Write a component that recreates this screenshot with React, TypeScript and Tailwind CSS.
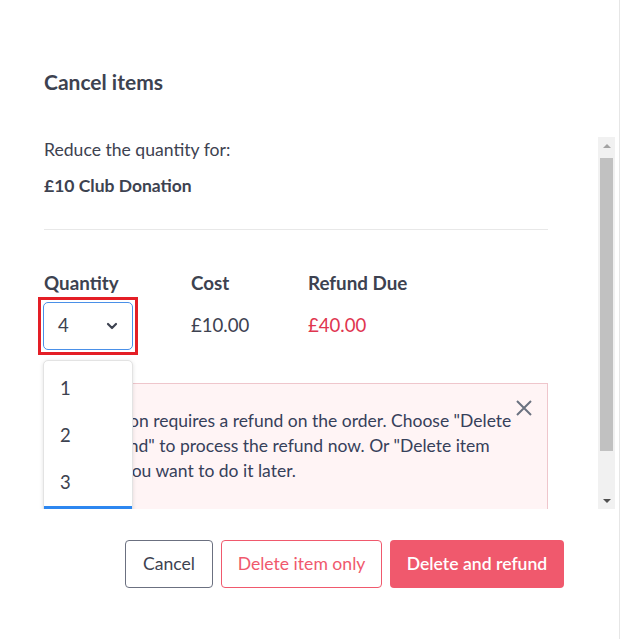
import * as React from 'react';

const options = [1, 2, 3, 4];

const Scrollbar: React.FC = () => (
    <div className="flex h-full w-[17px] flex-col bg-[#f1f1f1]">
        <div className="flex h-[17px] items-center justify-center">
            <div className="h-0 w-0 border-x-[4px] border-b-[4px] border-x-transparent border-b-[#a3a3a3]" />
        </div>
        <div className="mx-[2px] mt-[4px] h-[293px] bg-[#c1c1c1]" />
        <div className="flex-1" />
        <div className="flex h-[17px] items-center justify-center">
            <div className="h-0 w-0 border-x-[4px] border-t-[4px] border-x-transparent border-t-[#505050]" />
        </div>
    </div>
);

const QuantitySelect: React.FC = () => (
    <div className="relative w-[90px]">
        <div className="flex h-[48px] w-[90px] items-center justify-between rounded-[5px] border-[1.5px] border-[#4a90e8] pl-[14px] pr-[14px]">
            <span className="text-[18.5px] text-[#3d4250]">4</span>
            <svg width="12" height="8" viewBox="0 0 12 8" fill="none">
                <path d="M2 2l4 4 4-4" stroke="#3d4250" strokeWidth="2.2" strokeLinecap="round" strokeLinejoin="round" />
            </svg>
        </div>
        {/* red highlight frame drawn over the select */}
        <div className="pointer-events-none absolute -inset-[5px] border-[3px] border-[#e41e26]" />
        <div className="absolute left-0 top-[58px] z-10 w-[90px] rounded-t-[5px] border border-[#e3e3e3] bg-white pt-[4px] shadow-[0_1px_4px_rgba(0,0,0,0.12)]">
            {options.map(n => (
                <div
                    key={n}
                    className={`flex h-[47px] items-center pl-[16px] text-[18.5px] ${n === 4 ? 'bg-[#2d87f0] text-white' : 'text-[#3d4250]'}`}
                >
                    {n}
                </div>
            ))}
        </div>
    </div>
);

export default function App() {
    return (
        <div className="h-[639px] w-[621px] overflow-hidden bg-white font-['Lato','Noto_Sans',sans-serif] text-[#3d4250]">
            <div className="h-full w-[620px] border-r border-[#e6e6e6]">
                <h2 className="pl-[44px] pt-[70px] text-[21px] font-bold leading-[24px] text-[#3d4250]">Cancel items</h2>

                <div className="mt-[43px] flex h-[372px] w-[615px] overflow-hidden">
                    <div className="w-[598px] pl-[44px] pr-[50px]">
                        <p className="mt-[1px] text-[17.6px] leading-[24px]">Reduce the quantity for:</p>
                        <p className="mt-[12px] text-[17.5px] font-bold leading-[24px]">£10 Club Donation</p>
                        <div className="mt-[31px] h-px bg-[#e8e8e8]" />

                        <div className="mt-[41px] grid grid-cols-[147px_117px_1fr]">
                            <div className="text-[18.8px] font-bold leading-[24px]">Quantity</div>
                            <div className="text-[18.8px] font-bold leading-[24px]">Cost</div>
                            <div className="text-[18.8px] font-bold leading-[24px]">Refund Due</div>
                            <div className="mt-[7px] -ml-[1px]"><QuantitySelect /></div>
                            <div className="mt-[7px] flex h-[48px] items-center text-[18.6px]">£10.00</div>
                            <div className="mt-[7px] flex h-[48px] items-center text-[18.6px] text-[#e0364f]">£40.00</div>
                        </div>

                        <div className="relative mt-[33px] h-[127px] border border-[#efc6cc] bg-[#fff4f5] pl-[20px] pr-[28px] pt-[24px]">
                            <p className="text-[17.5px] leading-[25px] text-[#36405a]">
                                This action requires a refund on the order. Choose "Delete and refund" to process the refund now. Or "Delete item only" if you want to do it later.
                            </p>
                            <button className="absolute right-[14px] top-[15px] text-[#6b7280]" aria-label="Close">
                                <svg width="18" height="18" viewBox="0 0 18 18" fill="none">
                                    <path d="M2 2l14 14M16 2L2 16" stroke="currentColor" strokeWidth="2" />
                                </svg>
                            </button>
                        </div>
                    </div>
                    <Scrollbar />
                </div>

                <div className="mt-[31px] flex justify-end gap-[8px] pr-[55px]">
                    <button className="h-[48px] w-[88px] rounded-[4px] border border-[#6b7080] text-[17.6px] text-[#3d4250]">Cancel</button>
                    <button className="h-[48px] w-[161px] rounded-[4px] border border-[#f0596d] text-[17.6px] text-[#f0596d]">Delete item only</button>
                    <button className="h-[48px] w-[174px] rounded-[4px] bg-[#f0596d] text-[17.6px] font-semibold text-white">Delete and refund</button>
                </div>
            </div>
        </div>
    );
}
